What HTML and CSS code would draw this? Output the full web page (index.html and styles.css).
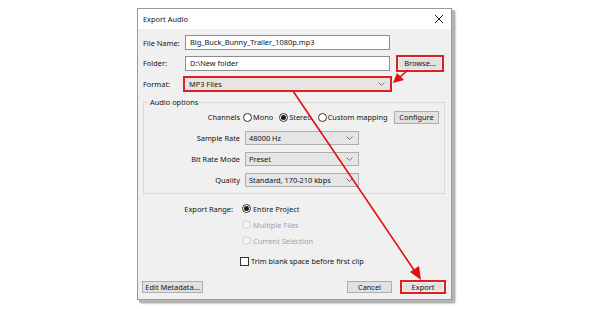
FILE: index.html
```html
<!DOCTYPE html>
<html>
<head>
<meta charset="utf-8">
<link rel="stylesheet" href="styles.css">
</head>
<body>
<div class="dialog">
  <div class="titlebar">
    <span>Export Audio</span>
    <svg class="close" width="10" height="10" viewBox="0 0 10 10"><path d="M1 1L9 9M9 1L1 9" stroke="#222" stroke-width="1"/></svg>
  </div>
  <div class="content">
    <div class="file-grid">
      <span class="lbl-l">File Name:</span>
      <div class="input">Big_Buck_Bunny_Trailer_1080p.mp3</div>
      <span></span>
      <span class="lbl-l">Folder:</span>
      <div class="input">D:\New folder</div>
      <div class="btn hl browse">Browse...</div>
      <span class="lbl-l">Format:</span>
      <div class="select format"><span>MP3 Files</span><svg class="chev" width="7" height="4" viewBox="0 0 7 4"><path d="M0.5 0.5L3.5 3.5L6.5 0.5" fill="none" stroke="#666" stroke-width="0.9"/></svg></div>
      <span></span>
    </div>

    <fieldset class="group">
      <legend>Audio options</legend>
      <div class="opt-grid">
        <span class="lbl-r">Channels</span>
        <div class="channels">
          <span class="radio"></span><span class="rtext">Mono</span>
          <span class="radio on"></span><span class="rtext">Stereo</span>
          <span class="radio"></span><span class="rtext last">Custom mapping</span>
          <div class="btn configure">Configure</div>
        </div>
        <span class="lbl-r">Sample Rate</span>
        <div class="select sm"><span>48000 Hz</span><svg class="chev" width="7" height="4" viewBox="0 0 7 4"><path d="M0.5 0.5L3.5 3.5L6.5 0.5" fill="none" stroke="#666" stroke-width="0.9"/></svg></div>
        <span class="lbl-r">Bit Rate Mode</span>
        <div class="select sm"><span>Preset</span><svg class="chev" width="7" height="4" viewBox="0 0 7 4"><path d="M0.5 0.5L3.5 3.5L6.5 0.5" fill="none" stroke="#666" stroke-width="0.9"/></svg></div>
        <span class="lbl-r">Quality</span>
        <div class="select sm"><span>Standard, 170-210 kbps</span><svg class="chev" width="7" height="4" viewBox="0 0 7 4"><path d="M0.5 0.5L3.5 3.5L6.5 0.5" fill="none" stroke="#666" stroke-width="0.9"/></svg></div>
      </div>
    </fieldset>

    <div class="range">
      <span class="lbl-r">Export Range:</span>
      <div class="ropt"><span class="radio on"></span><span class="rtext">Entire Project</span></div>
      <span></span>
      <div class="ropt disabled"><span class="radio"></span><span class="rtext">Multiple Files</span></div>
      <span></span>
      <div class="ropt disabled"><span class="radio"></span><span class="rtext">Current Selection</span></div>
      <span></span>
      <div class="ropt check-row"><span class="check"></span><span class="rtext">Trim blank space before first clip</span></div>
    </div>

    <div class="footer">
      <div class="btn meta">Edit Metadata...</div>
      <div class="spacer"></div>
      <div class="btn cancel">Cancel</div>
      <div class="btn export hl">Export</div>
    </div>
  </div>
</div>

<svg class="arrows" width="600" height="309" viewBox="0 0 600 309">
  <line x1="408" y1="70" x2="400" y2="77" stroke="#e01010" stroke-width="1.6"/>
  <polygon points="393,83 397,73 404,80" fill="#e01010"/>
  <line x1="293" y1="91" x2="414" y2="270" stroke="#e01010" stroke-width="1.6"/>
  <polygon points="421,280 410,272 419,266" fill="#e01010"/>
</svg>
</body>
</html>
```
FILE: styles.css
```css
* { box-sizing: border-box; }
html, body { margin: 0; padding: 0; background: #fff; }
body {
  width: 600px;
  height: 309px;
  padding: 8px 0 0 137px;
  position: relative;
  font-family: "Noto Sans", "Open Sans", sans-serif;
  font-size: 7.4px;
  color: #141414;
  overflow: hidden;
}
.dialog {
  width: 315px;
  height: 292px;
  border: 1px solid #9a9a9a;
  background: #f0f0f0;
  box-shadow: 2px 2px 0 #b5b5b5, 3px 3px 2px #8c8c8c;
  display: flex;
  flex-direction: column;
}
.titlebar {
  height: 20px;
  background: #fff;
  display: flex;
  align-items: center;
  justify-content: space-between;
  padding: 0 7px 0 5px;
  flex: none;
}
.close { display: block; }
.content {
  flex: 1;
  display: flex;
  flex-direction: column;
  padding: 6px 5px 5px 5px;
}
.file-grid {
  display: grid;
  grid-template-columns: 40px 205px 51px;
  grid-template-rows: 15px 16px 16px;
  column-gap: 2px;
  row-gap: 5px;
  align-items: center;
}
.lbl-l { white-space: nowrap; }
.lbl-r { white-space: nowrap; text-align: right; }
.input {
  height: 15px;
  border: 1px solid #8e8e8e;
  background: #fff;
  padding: 0 4px;
  line-height: 13px;
  white-space: nowrap;
  overflow: hidden;
}
.btn {
  height: 15px;
  border: 1px solid #adadad;
  background: #e1e1e1;
  display: flex;
  align-items: center;
  justify-content: center;
  white-space: nowrap;
}
.btn.hl {
  border: 2px solid #e02020;
  box-shadow: inset 0 0 0 1px #f2f2f2;
}
.browse {
  width: 48px;
  height: 17px;
  justify-self: end;
  margin-right: -1px;
}
.select {
  display: flex;
  align-items: center;
  justify-content: space-between;
  border: 1px solid #adadad;
  background: #e5e5e5;
  padding: 0 5px 0 3px;
  white-space: nowrap;
}
.select.format {
  height: 16px;
  margin: 0 -2px;
  border: 2px solid #e02020;
  padding-left: 4px;
}
.chev { display: block; flex: none; }
.group {
  margin: 4px 1px 0 0;
  padding: 1px 6px 6px 0;
  border: 1px solid #dadada;
  min-width: 0;
}
.group legend {
  margin-left: 5px;
  padding: 0 1px;
  line-height: 13px;
}
.opt-grid {
  display: grid;
  grid-template-columns: 96px 114px;
  grid-auto-rows: 14px;
  row-gap: 7px;
  column-gap: 5px;
  align-items: center;
}
.channels {
  grid-column: 2 / span 1;
  width: 196px;
  margin-left: -2px;
  display: flex;
  align-items: center;
  height: 14px;
}
.radio {
  width: 9px;
  height: 9px;
  border: 1px solid #333;
  border-radius: 50%;
  background: #fff;
  flex: none;
  display: flex;
  align-items: center;
  justify-content: center;
}
.radio.on::after {
  content: "";
  width: 5px;
  height: 5px;
  border-radius: 50%;
  background: #1a1a1a;
}
.rtext { margin: 0 6px 0 1px; white-space: nowrap; }
.rtext.last { margin-right: 0; }
.configure {
  margin-left: auto;
  width: 45px;
  height: 13px;
}
.sm { height: 14px; }
.range {
  margin-top: 8px;
  display: grid;
  grid-template-columns: 90px auto;
  grid-auto-rows: 13px;
  column-gap: 9px;
  row-gap: 3px;
  align-items: center;
}
.ropt { display: flex; align-items: center; }
.ropt .rtext { margin-left: 2px; }
.disabled .radio { border-color: #cfcfcf; background: #f4f4f4; }
.disabled .rtext { color: #a2a2a2; }
.check-row { margin-top: 9px; margin-left: -2px; }
.check {
  width: 9px;
  height: 9px;
  border: 1px solid #333;
  background: #fff;
  flex: none;
}
.footer {
  margin-top: auto;
  display: flex;
  align-items: center;
}
.footer .btn { height: 12px; }
.footer .btn.hl { height: 14px; }
.meta { width: 61px; margin-left: -1px; }
.spacer { flex: 1; }
.cancel { width: 45px; margin-right: 8px; }
.export { width: 46px; }
.arrows {
  position: absolute;
  left: 0;
  top: 0;
  pointer-events: none;
}
```
